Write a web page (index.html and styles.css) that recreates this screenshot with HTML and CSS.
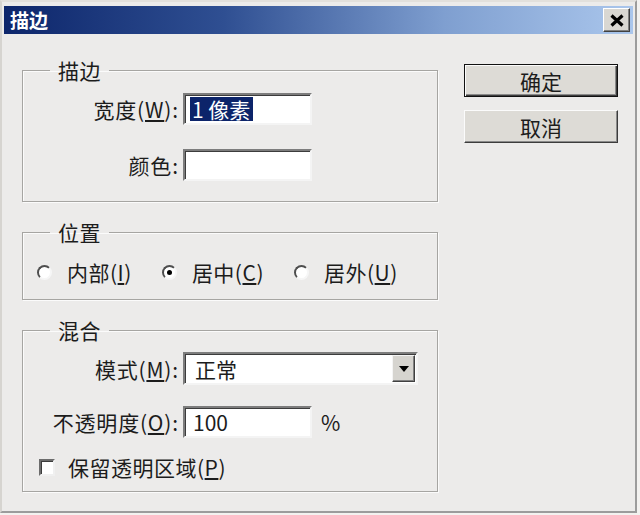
FILE: index.html
```html
<!DOCTYPE html>
<html lang="zh-CN">
<head>
  <meta charset="UTF-8">
  <title>描边</title>
  <link rel="stylesheet" href="styles.css">
</head>
<body>
  <div class="window">
    <div class="titlebar">
      <span class="title">描边</span>
      <button class="close" type="button" aria-label="关闭">
        <svg width="16" height="13" viewBox="0 0 16 13">
          <path d="M2.5 1.5 L13.5 11.5 M13.5 1.5 L2.5 11.5" stroke="#000" stroke-width="3.2" fill="none"/>
        </svg>
      </button>
    </div>

    <div class="dialog">
      <form class="options" onsubmit="event.preventDefault();">

        <fieldset class="group group-stroke">
          <legend>描边</legend>
          <div class="field-grid">
            <label class="field-label">宽度(<u>W</u>):</label>
            <div class="textbox small"><span class="selected">1 像素</span></div>

            <label class="field-label">颜色:</label>
            <div class="textbox small"></div>
          </div>
        </fieldset>

        <fieldset class="group group-position">
          <legend>位置</legend>
          <div class="radio-row">
            <label class="radio"><span class="radio-dot"></span><span>内部(<u>I</u>)</span></label>
            <label class="radio"><span class="radio-dot checked"></span><span>居中(<u>C</u>)</span></label>
            <label class="radio"><span class="radio-dot"></span><span>居外(<u>U</u>)</span></label>
          </div>
        </fieldset>

        <fieldset class="group group-blend">
          <legend>混合</legend>
          <div class="field-grid blend-grid">
            <label class="field-label">模式(<u>M</u>):</label>
            <div class="textbox combo">
              <span class="combo-value">正常</span>
              <span class="combo-arrow">
                <svg width="10" height="6" viewBox="0 0 10 6"><path d="M0 0 H10 L5 6 Z" fill="#000"/></svg>
              </span>
            </div>

            <label class="field-label">不透明度(<u>O</u>):</label>
            <div class="opacity-cell">
              <div class="textbox small"><span class="value">100</span></div>
              <span class="unit">%</span>
            </div>
          </div>
          <label class="checkbox"><span class="check-box"></span><span>保留透明区域(<u>P</u>)</span></label>
        </fieldset>

      </form>

      <div class="actions">
        <button class="btn btn-default" type="button">确定</button>
        <button class="btn" type="button">取消</button>
      </div>
    </div>
  </div>
</body>
</html>
```

FILE: styles.css
```css
* {
  box-sizing: border-box;
}

body {
  margin: 0;
  background: #f3f2f0;
  font-family: "Noto Sans CJK SC", "Liberation Sans", sans-serif;
  color: #1c1c1c;
}

.window {
  width: 637px;
  height: 513px;
  background: #ecebea;
  border-top: 2px solid #e2e0dc;
  border-left: 2px solid #d6d4d0;
  border-right: 2px solid #9c9c9c;
  border-bottom: 2px solid #9c9c9c;
  padding: 4px 2px 0 2px;
}

.titlebar {
  height: 28px;
  display: flex;
  align-items: center;
  justify-content: space-between;
  padding: 0 3px 0 6px;
  background: linear-gradient(to right, #0d266b, #2f4f92 35%, #7f9fd0 70%, #aac6ec);
}

.title {
  color: #fff;
  font-weight: 700;
  font-size: 19px;
  line-height: 24px;
}

.close {
  width: 27px;
  height: 24px;
  padding: 0;
  display: flex;
  align-items: center;
  justify-content: center;
  background: #d9d7d2;
  border: 1px solid;
  border-color: #fff #404040 #404040 #fff;
  box-shadow: inset -1px -1px #808080;
}

.dialog {
  display: flex;
  padding-left: 18px;
}

.options {
  width: 416px;
  margin-top: 24px;
  font-size: 21px;
  letter-spacing: 0.5px;
}

.group {
  margin: 0 0 18px;
  padding: 0;
  border: 1px solid #a6a5a2;
  box-shadow: inset 1px 1px #fbfbfb, 1px 1px #fbfbfb;
  min-width: 0;
}

.group legend {
  margin-left: 27px;
  padding: 0 8px;
  line-height: 24px;
}

.group-stroke {
  padding: 11px 0 20px;
}

.group-position {
  padding: 16px 0 15px;
}

.group-blend {
  padding: 10px 0 12px;
}

.field-grid {
  display: grid;
  grid-template-columns: 155px 129px;
  column-gap: 5px;
  row-gap: 24px;
  align-items: center;
}

.blend-grid {
  grid-template-columns: 155px 235px;
  row-gap: 21px;
}

.field-label {
  text-align: right;
  line-height: 24px;
  white-space: nowrap;
  letter-spacing: 0.8px;
  margin-right: -0.8px;
}

.textbox {
  height: 32px;
  background: #fff;
  border: 2px solid;
  border-color: #7d7d7d #f4f4f4 #f4f4f4 #7d7d7d;
  box-shadow: inset 1px 1px #3c3c3c;
  display: flex;
  align-items: center;
  line-height: 24px;
  letter-spacing: 0;
}

.small {
  width: 129px;
}

.selected {
  margin-left: 5px;
  padding: 0 3px 0 2px;
  background: #0c246a;
  color: #fff;
}

.value {
  margin-left: 8px;
}

.combo {
  height: 33px;
  justify-content: space-between;
}

.combo-value {
  margin-left: 10px;
}

.combo-arrow {
  width: 23px;
  height: 27px;
  margin-right: 1px;
  display: flex;
  align-items: center;
  justify-content: center;
  background: #d6d4cf;
  border: 1px solid;
  border-color: #f4f4f4 #404040 #404040 #f4f4f4;
  box-shadow: inset -1px -1px #808080;
}

.opacity-cell {
  display: flex;
  align-items: center;
}

.unit {
  margin-left: 9px;
  line-height: 24px;
}

.radio-row {
  display: flex;
  gap: 30px;
  padding-left: 14px;
}

.radio {
  display: flex;
  align-items: center;
  gap: 15px;
  line-height: 24px;
  white-space: nowrap;
}

.radio-dot {
  flex: 0 0 15px;
  width: 15px;
  height: 15px;
  border-radius: 50%;
  border: 2px solid;
  border-color: #4e4e4e #f6f6f6 #f6f6f6 #4e4e4e;
  background: #fff;
  display: flex;
  align-items: center;
  justify-content: center;
}

.radio-dot.checked::after {
  content: "";
  width: 5px;
  height: 5px;
  border-radius: 50%;
  background: #000;
}

.checkbox {
  display: flex;
  align-items: center;
  gap: 13px;
  margin-top: 17px;
  padding-left: 16px;
  line-height: 24px;
  white-space: nowrap;
}

.check-box {
  flex: 0 0 16px;
  width: 16px;
  height: 17px;
  background: #fff;
  border: 2px solid;
  border-color: #6c6c6c #f0f0f0 #f0f0f0 #6c6c6c;
  box-shadow: inset 1px 1px #3c3c3c;
}

.actions {
  display: flex;
  flex-direction: column;
  gap: 13px;
  margin: 30px 0 0 26px;
}

.btn {
  width: 154px;
  height: 33px;
  padding: 0;
  font-family: inherit;
  font-size: 21px;
  line-height: 24px;
  color: #1c1c1c;
  background: #dddbd6;
  border: 1px solid;
  border-color: #fbfbfb #3c3c3c #3c3c3c #fbfbfb;
  box-shadow: inset -1px -1px #8a8a8a;
}

.btn-default {
  border: 1px solid #111;
  box-shadow: inset 1px 1px #fbfbfb, inset -1px -1px #3c3c3c, inset -2px -2px #8a8a8a;
}
```
